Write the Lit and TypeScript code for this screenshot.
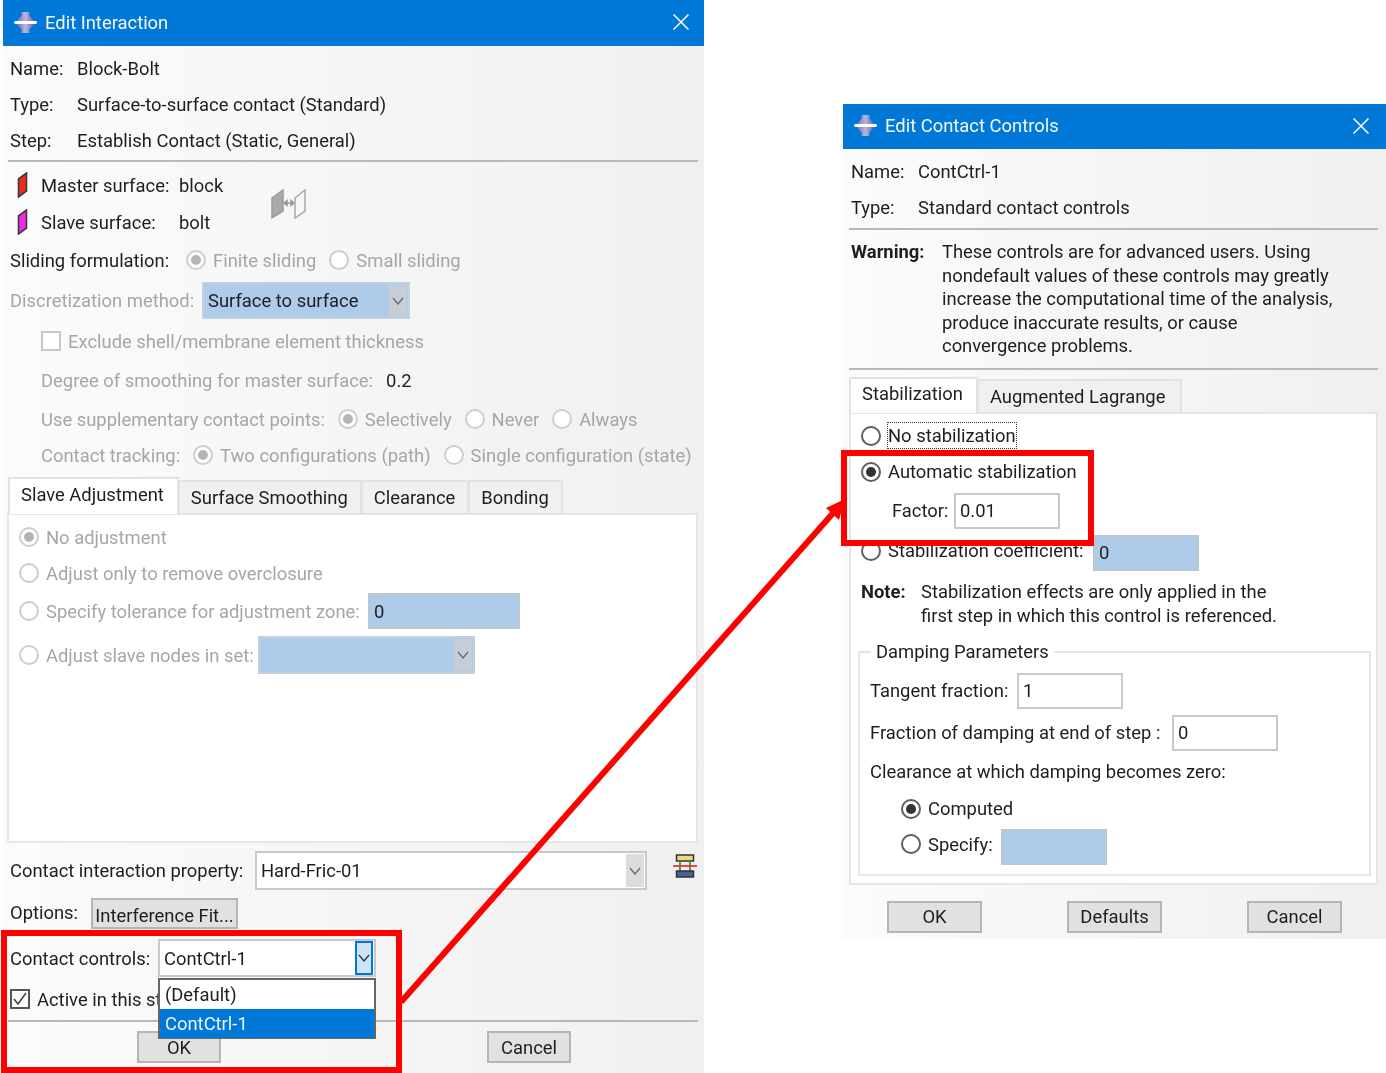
import { LitElement, html, css, svg } from "lit";
import { customElement } from "lit/decorators.js";

const titleIcon = html`<svg class="ticon" viewBox="0 0 24 24">
  <defs><linearGradient id="tg" x1="0" x2="1" y1="0" y2="0"><stop offset="0" stop-color="#6a64b0"/><stop offset=".5" stop-color="#b9b4e0"/><stop offset="1" stop-color="#5d57a5"/></linearGradient></defs>
  <path d="M8 1h8v4l6 6H2l6-6zM2 13h20l-6 6v4H8v-4z" fill="url(#tg)"/>
  <rect x="0" y="10.5" width="24" height="3" rx="1.5" fill="#fff"/></svg>`;
const closeIcon = html`<svg class="close" viewBox="0 0 16 16"><path d="M.5.5l15 15M15.5.5l-15 15" stroke="#fff" stroke-width="1.5" fill="none"/></svg>`;
const chevron = html`<svg class="chev" viewBox="0 0 12 8"><path d="M1 1l5 6 5-6" stroke="#6a6a6a" stroke-width="1.3" fill="none"/></svg>`;
const surf = (c: string) => html`<svg class="surf" viewBox="0 0 11 26"><path d="M1.5 7L9.5 1v18L1.5 25z" fill="${c}" stroke="#3c3c3c" stroke-width="1.6"/></svg>`;
const linkIcon = html`<svg class="link" viewBox="0 0 36 32">
  <path d="M2 10L13 2v21L2 30z" fill="#a9a9a9" stroke="#9a9a9a" stroke-width="1.5"/>
  <path d="M25 10l10-8v21l-10 7z" fill="none" stroke="#a9a9a9" stroke-width="1.5"/>
  <path d="M14 15h10M14 15l3-2.500v5zM24 15l-3-2.500v5z" stroke="#999" stroke-width="1.500" fill="#999"/></svg>`;
const propIcon = html`<svg class="prop" viewBox="0 0 24 24">
  <rect x="3.500" y="1" width="17" height="6" fill="#ecd978" stroke="#333" stroke-width="1.500"/>
  <path d="M7 7v10M17 7v10" stroke="#2f9a4a" stroke-width="1.800"/>
  <path d="M0 12h24" stroke="#e33" stroke-width="1.800"/>
  <rect x="3.500" y="17" width="17" height="6" fill="#4c5d9a" stroke="#333" stroke-width="1.500"/></svg>`;
const check = html`<svg class="tick" viewBox="0 0 16 16"><path d="M2 8l4 5 8-11" stroke="#444" stroke-width="1.600" fill="none"/></svg>`;

const radio = (on = false, dis = false) => html`<span class="radio ${on ? "on" : ""} ${dis ? "dis" : ""}"></span>`;
const opt = (t: string, on = false, dis = false, cls = "") => html`<span class="opt ${dis ? "muted" : ""} ${cls}">${radio(on, dis)}<span>${t}</span></span>`;
const combo = (cls: string, text: string) => html`<div class="combo ${cls}"><span class="ct">${text}</span><span class="cbtn">${chevron}</span></div>`;

@customElement("app-root")
export class AppRoot extends LitElement {
  static styles = css`
    :host { display: block; position: relative; width: 1386px; height: 1073px; background: #fff; overflow: hidden;
      font-family: Roboto, "Noto Sans", sans-serif; font-size: 18.4px; line-height: 23px; color: #1e1e1e; }
    * { box-sizing: border-box; }
    .win { position: absolute; display: flex; flex-direction: column; background: linear-gradient(90deg, #fbfbfb, #f0f0f0); filter: blur(.5px); white-space: nowrap; }
    .w1 { left: 3px; top: 0; width: 701px; height: 1073px; }
    .w2 { left: 843px; top: 104px; width: 543px; height: 835px; }
    .title { flex: none; display: flex; align-items: center; background: #0078d7; color: #f4f8fc; }
    .w1 .title { height: 46px; padding: 0 15px 2px 11px; }
    .w2 .title { height: 45px; padding: 0 17px 2px 11px; }
    .ticon { width: 23px; height: 23px; margin-right: 8px; flex: none; }
    .close { width: 16px; height: 16px; margin-left: auto; }
    .body1 { padding: 4px 0 0 7px; }
    .body2 { padding: 4px 0 0 8px; }
    .row { display: flex; align-items: center; height: 36px; }
    .lab1 { width: 67px; flex: none; }
    .sep { height: 2px; background: #b9b9b9; }
    .w1 .sep { width: 690px; margin-left: -2px; }
    .w2 .sep { width: 529px; margin-left: -2px; }
    .mt1 { margin-top: 1px; } .mt2 { margin-top: 2px; } .mt3 { margin-top: 3px; } .mt4 { margin-top: 4px; }
    .mt5 { margin-top: 5px; } .mt6 { margin-top: 6px; } .mt7 { margin-top: 7px; } .mt8 { margin-top: 8px; } .mt9 { margin-top: 9px; } .mt10 { margin-top: 10px; }
    .h37 { height: 37px; } .h38 { height: 38px; } .h39 { height: 39px; } .h31 { height: 31px; }
    .surfs { display: flex; align-items: center; }
    .surfcol { width: 260px; flex: none; }
    .surfrow { padding-left: 7px; }
    .surf { width: 11px; height: 26px; flex: none; margin-right: 13px; }
    .sl { width: 138px; flex: none; }
    .link { width: 36px; height: 32px; }
    .muted { color: #a6a6a6; }
    .dark { color: #1e1e1e; }
    .opt { display: inline-flex; align-items: center; gap: 7px; flex: none; }
    .radio { position: relative; width: 20px; height: 20px; flex: none; border-radius: 50%; border: 2px solid #5e5e5e; background: #fff; }
    .radio.dis { border-color: #cdcdcd; }
    .radio.on::after { content: ""; position: absolute; left: 3px; top: 3px; width: 10px; height: 10px; border-radius: 50%; background: #333; }
    .radio.dis.on::after { background: #b5b5b5; }
    .l169 { width: 169px; flex: none; }
    .l-disc { width: 185px; flex: none; }
    .l-prop { width: 238px; flex: none; }
    .l-opts { width: 81px; flex: none; padding-bottom: 3px; }
    .l-ctrl { width: 148px; flex: none; }
    .o-tol { width: 342px; }
    .o-set { width: 232px; }
    .o-coef { width: 226px; margin-bottom: 4px; }
    .o-spec { width: 93px; margin-bottom: 5px; }
    .l-tan { width: 140px; flex: none; }
    .l-frac { width: 295px; flex: none; }
    .l-fac { width: 55px; flex: none; }
    .indent { margin-left: 31px; }
    .gap { display: flex; gap: 13px; }
    .combo { position: relative; display: flex; align-items: center; height: 100%; border: 2px solid #c9c9c9; background: #fff; padding-left: 4px; flex: none; }
    .ct { flex: 1; }
    .cbtn { display: flex; align-items: center; justify-content: center; width: 18px; align-self: stretch; margin: 1px; background: #dcdcdc; }
    .chev { width: 12px; height: 8px; }
    .combo.blue { background: #aecbea; border-color: #c3d0de; }
    .blue .cbtn { background: #c6cdd6; }
    .c-disc { width: 208px; margin-left: 7px; }
    .c-slave { width: 217px; margin-left: 7px; }
    .c-prop { width: 392px; margin-left: 7px; }
    .prop { width: 24px; height: 24px; margin: -10px 0 0 26px; }
    .check { display: flex; align-items: center; justify-content: center; width: 20px; height: 20px; border: 2px solid #c8c8c8; background: #fff; flex: none; }
    .check.dk { border-color: #555; }
    .tick { width: 16px; height: 16px; }
    .tabs { display: flex; align-items: flex-end; height: 37px; margin-bottom: -1px; margin-left: -2px; position: relative; z-index: 1; }
    .w2 .tabs { height: 36px; }
    .tab { display: flex; align-items: center; height: 34px; padding: 0 12px 0 11px; border: 2px solid #e3e3e3; border-left-width: 1px; border-bottom: 1px solid #e3e3e3; background: #f0f0f0; }
    .tab.aug { padding-right: 15px; }
    .tab.act { height: 100%; padding: 0 13px 4px 11px; background: #fff; border-bottom: none; border-left-width: 2px; }
    .panel { border: 2px solid #e6e6e6; background: #fff; }
    .p1 { width: 691px; height: 330px; margin-left: -3px; padding: 4px 0 0 10px; }
    .p2 { width: 529px; height: 473px; margin-left: -2px; padding: 4px 0 0 10px; }
    .inp { display: flex; align-items: center; height: 36px; width: 106px; padding-left: 4px; border: 2px solid #c9c9c9; background: #fff; flex: none; }
    .inp.blue { background: #aecbea; border-color: #bdc7d2; }
    .inp.i152 { width: 152px; }
    .i7 { margin-left: 7px; }
    .focus { outline: 1px dotted #333; padding: 1px 0; }
    .btn { display: flex; align-items: center; justify-content: center; height: 32px; width: 84px; background: #e1e1e1; border: 2px solid #b5b5b5; flex: none; }
    .btn-fit { width: 147px; height: 31px; padding-top: 4px; }
    .dd-wrap { position: relative; width: 218px; height: 38px; flex: none; }
    .sel .cbtn { background: #cce4f7; border: 2px solid #0078d7; margin: 0 1px; }
    .sel .chev path { stroke: #333; }
    .dropdown { position: absolute; left: 0; top: 39px; width: 218px; height: 61px; background: #fff; border: 2px solid #666; z-index: 2; }
    .dropdown div { display: flex; align-items: center; height: 29px; padding-left: 5px; }
    .dropdown .hl { background: #0078d7; color: #eaf4ff; }
    .btnrow1 { display: flex; padding-left: 127px; gap: 266px; }
    .warn { display: flex; line-height: 23.5px; }
    .bold { font-weight: 700; }
    .w91 { width: 91px; flex: none; }
    .note { display: flex; line-height: 24px; }
    .w60 { width: 60px; flex: none; }
    fieldset { width: 513px; height: 236px; margin: 12px 0 0 -3px; padding: 9px 0 0 10px; border: 2px solid #e6e6e6; }
    legend { margin-left: 1px; padding: 0 5px; height: 24px; line-height: 24px; }
    .ml31 { margin-left: 31px; }
    .ml6 { margin-left: 6px; }
    .btnrow2 { display: flex; padding-left: 44px; gap: 85px; margin-top: 16px; }
    .btnrow2 .btn { width: 95px; }
    .overlay { position: absolute; left: 0; top: 0; width: 1386px; height: 1073px; z-index: 5; pointer-events: none; }
  `;

  render() {
    return html`
      <div class="win w1">
        <div class="title">${titleIcon}<span>Edit Interaction</span>${closeIcon}</div>
        <div class="body1">
          <div class="row"><span class="lab1">Name:</span><span>Block-Bolt</span></div>
          <div class="row"><span class="lab1">Type:</span><span>Surface-to-surface contact (Standard)</span></div>
          <div class="row"><span class="lab1">Step:</span><span>Establish Contact (Static, General)</span></div>
          <div class="sep mt2"></div>
          <div class="surfs mt5">
            <div class="surfcol">
              <div class="row surfrow">${surf("#f02a20")}<span class="sl">Master surface:</span><span>block</span></div>
              <div class="row surfrow mt1">${surf("#f02ae0")}<span class="sl">Slave surface:</span><span>bolt</span></div>
            </div>
            ${linkIcon}
          </div>
          <div class="row gap mt2"><span class="opt"><span class="l169">Sliding formulation:</span>${radio(true, true)}<span class="muted">Finite sliding</span></span>${opt("Small sliding", false, true)}</div>
          <div class="row h37 mt4"><span class="muted l-disc">Discretization method:</span>${combo("blue c-disc", "Surface to surface")}</div>
          <div class="row indent mt4 muted"><span class="opt"><span class="check"></span>Exclude shell/membrane element thickness</span></div>
          <div class="row indent mt3 muted gap"><span>Degree of smoothing for master surface:</span><span class="dark">0.2</span></div>
          <div class="row indent mt3 muted gap"><span>Use supplementary contact points:</span>${opt("Selectively", true, true)}${opt("Never", false, true)}${opt("Always", false, true)}</div>
          <div class="row indent muted gap"><span>Contact tracking:</span>${opt("Two configurations (path)", true, true)}${opt("Single configuration (state)", false, true)}</div>
          <div class="tabs mt4">
            <div class="tab act">Slave Adjustment</div><div class="tab">Surface Smoothing</div><div class="tab">Clearance</div><div class="tab">Bonding</div>
          </div>
          <div class="panel p1">
            <div class="row">${opt("No adjustment", true, true)}</div>
            <div class="row">${opt("Adjust only to remove overclosure", false, true)}</div>
            <div class="row mt2">${opt("Specify tolerance for adjustment zone:", false, true, "o-tol")}<div class="inp blue i152 i7">0</div></div>
            <div class="row h38 mt7">${opt("Adjust slave nodes in set:", false, true, "o-set")}${combo("blue c-slave", "")}</div>
          </div>
          <div class="row h39 mt8"><span class="l-prop">Contact interaction property:</span>${combo("c-prop", "Hard-Fric-01")}${propIcon}</div>
          <div class="row h31 mt8"><span class="l-opts">Options:</span><div class="btn btn-fit">Interference Fit...</div></div>
          <div class="row h38 mt10"><span class="l-ctrl">Contact controls:</span>
            <div class="dd-wrap">${combo("sel", "ContCtrl-1")}
              <div class="dropdown"><div>(Default)</div><div class="hl">ContCtrl-1</div></div>
            </div>
          </div>
          <div class="row mt4"><span class="opt"><span class="check dk">${check}</span>Active in this step</span></div>
          <div class="sep mt3"></div>
          <div class="btnrow1 mt9"><div class="btn">OK</div><div class="btn">Cancel</div></div>
        </div>
      </div>

      <div class="win w2">
        <div class="title">${titleIcon}<span>Edit Contact Controls</span>${closeIcon}</div>
        <div class="body2">
          <div class="row"><span class="lab1">Name:</span><span>ContCtrl-1</span></div>
          <div class="row"><span class="lab1">Type:</span><span>Standard contact controls</span></div>
          <div class="sep mt3"></div>
          <div class="warn mt10"><span class="bold w91">Warning:</span><span>These controls are for advanced users. Using<br>nondefault values of these controls may greatly<br>increase the computational time of the analysis,<br>produce inaccurate results, or cause<br>convergence problems.</span></div>
          <div class="sep mt10"></div>
          <div class="tabs mt7"><div class="tab act">Stabilization</div><div class="tab aug">Augmented Lagrange</div></div>
          <div class="panel p2">
            <div class="row"><span class="opt">${radio()}<span class="focus">No stabilization</span></span></div>
            <div class="row">${opt("Automatic stabilization", true)}</div>
            <div class="row mt3 ml31"><span class="l-fac">Factor:</span><div class="inp i7">0.01</div></div>
            <div class="row mt6">${opt("Stabilization coefficient:", false, false, "o-coef")}<div class="inp blue ml6">0</div></div>
            <div class="note mt9"><span class="bold w60">Note:</span><span>Stabilization effects are only applied in the<br>first step in which this control is referenced.</span></div>
            <fieldset><legend>Damping Parameters</legend>
              <div class="row"><span class="l-tan">Tangent fraction:</span><div class="inp i7">1</div></div>
              <div class="row mt6"><span class="l-frac">Fraction of damping at end of step :</span><div class="inp i7">0</div></div>
              <div class="row mt3">Clearance at which damping becomes zero:</div>
              <div class="row ml31 mt1">${opt("Computed", true)}</div>
              <div class="row mt2 ml31">${opt("Specify:", false, false, "o-spec")}<div class="inp blue i7"></div></div>
            </fieldset>
          </div>
        </div>
        <div class="btnrow2"><div class="btn">OK</div><div class="btn">Defaults</div><div class="btn">Cancel</div></div>
      </div>

      <svg class="overlay" viewBox="0 0 1386 1073">
        ${svg`
          <rect x="4" y="933" width="395" height="137" fill="none" stroke="#f00" stroke-width="6"/>
          <rect x="844" y="453" width="247" height="90" fill="none" stroke="#f00" stroke-width="6"/>
          <path d="M401 1002L834 512" stroke="#f00" stroke-width="6" fill="none"/>
          <path d="M845 499L826 508L839 520z" fill="#f00"/>
        `}
      </svg>
    `;
  }
}
